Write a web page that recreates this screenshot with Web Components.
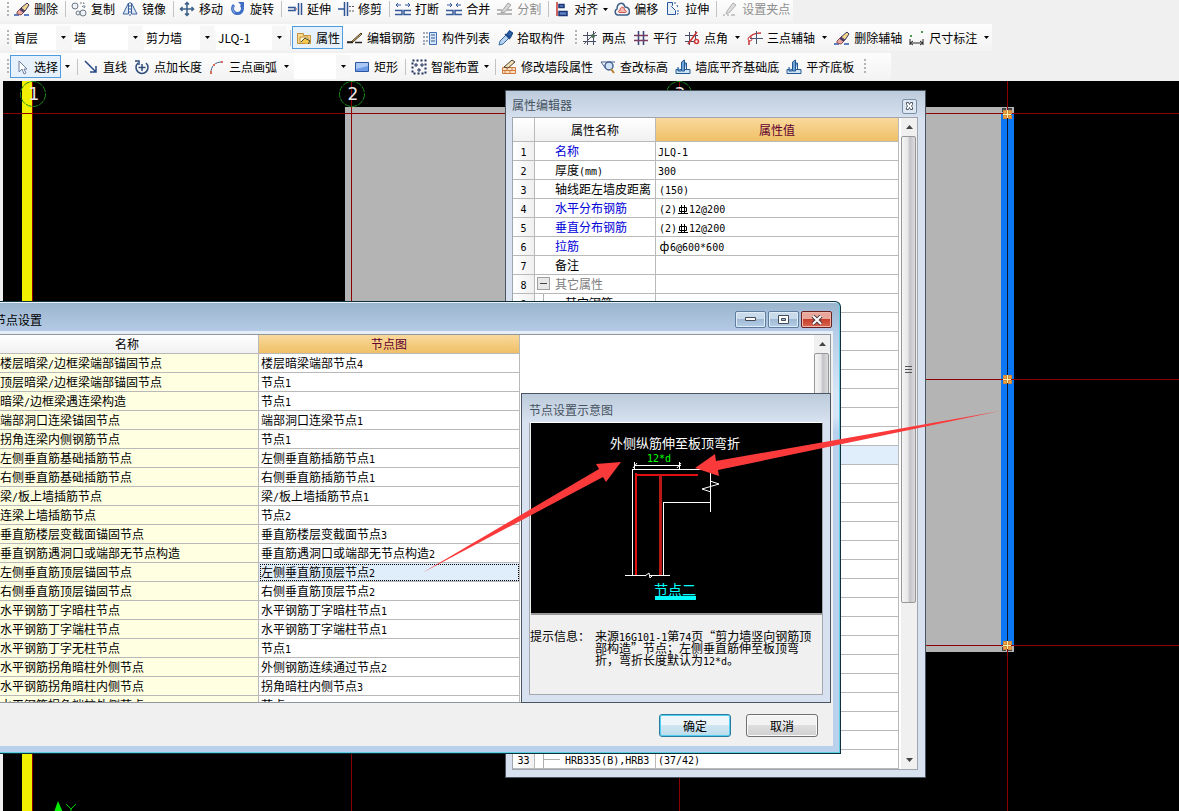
<!DOCTYPE html>
<html lang="zh-CN">
<head>
<meta charset="utf-8">
<title>节点设置</title>
<style>
  html, body { margin: 0; height: 100%; }
  body { font: 12px/18px "Noto Sans CJK SC", sans-serif; color: #000; background: #f0f0f0; text-spacing-trim: space-all; overflow: hidden; }
</style>
</head>
<body>
<cad-app></cad-app>
<script>
const ICONS = {
  erase: '<path d="M0 14h5M10 14h5" stroke="#5b7fc0" stroke-width="2"/><path d="M3 11l4-4 4 3-4 4-4-1z" fill="#e8a9a0" stroke="#8d4a50"/><path d="M7 7l6-5 2 2-4 6z" fill="#f3d78a" stroke="#3b3560"/><path d="M6 8l4 3" stroke="#4a3a6a" stroke-width="2"/>',
  copy: '<circle cx="4" cy="5" r="3" fill="#eef2f6" stroke="#6c7a86"/><circle cx="7" cy="12" r="2" fill="#eef2f6" stroke="#6c7a86"/><circle cx="12" cy="12" r="3" fill="#eef2f6" stroke="#6c7a86"/><path d="M9 2h4v4M11 5l2 2 2-2" fill="none" stroke="#6c7a86" stroke-dasharray="2 1"/>',
  mirror: '<path d="M6.500 2v11H1zM9.500 2v11H15z" fill="#dbe7f5" stroke="#3c629e"/><path d="M8 1v14" stroke="#3c629e" stroke-dasharray="2 1"/>',
  move: '<path d="M8 1v14M1 8h14M6 3.500l2-2 2 2M6 12.500l2 2 2-2M3.500 6l-2 2 2 2M12.500 6l2 2-2 2" fill="none" stroke="#3d6089" stroke-width="1.500"/>',
  rotate: '<path d="M4 4a5 5 0 1 0 7 0" fill="none" stroke="#3f6fc4" stroke-width="3"/><path d="M8 1h6v6z" fill="#3f6fc4"/><path d="M4 5a4.500 4.500 0 0 0 1 7" fill="none" stroke="#8fb3ea"/>',
  extend: '<path d="M1 6.500h7v3H1" stroke="#2f5596" stroke-width="1.500"/><path d="M9 8h2" stroke="#c33" stroke-dasharray="1 1"/><path d="M11.500 2v12M14.500 2v12" stroke="#2f5596" stroke-width="1.500"/>',
  trim: '<path d="M0 8h6M6.500 1v14M9.500 1v14" stroke="#2f5596" stroke-width="1.500"/><path d="M11 5.500h5M11 10h5" stroke="#556" stroke-dasharray="2 1"/>',
  brk: '<path d="M6 4H1m2-2L1 4l2 2M10 4h5m-2-2l2 2-2 2" fill="none" stroke="#35599a"/><path d="M0 9.500h7v4H0M16 9.500H9v4h7" fill="none" stroke="#35599a" stroke-width="1.500"/>',
  merge: '<path d="M1 4h5M4 2l2 2-2 2M15 4h-5m2-2l-2 2 2 2" fill="none" stroke="#35599a"/><path d="M0 9.500h7v4H0M16 9.500H9v4h7" fill="none" stroke="#35599a" stroke-width="1.500"/>',
  split: '<path d="M5 10l6-8 3 2-6 7-4 1z" fill="#d8d8d8" stroke="#a2a2a2"/><path d="M0 9h5M0 13h15M10 9h5" stroke="#a2a2a2" stroke-width="1.500"/>',
  align: '<path d="M3 1v14" stroke="#c6342f" stroke-width="1.500"/><path d="M5 3.500h5v3H5zM5 10.500h8v4H5z" fill="#5f7fc4" stroke="#1a3474" stroke-width="1.500"/>',
  offset: '<path d="M4 14C1 14 0 9 3 8c0-6 6-8 8-2 5 0 6 7 2 8z" fill="none" stroke="#3f5f88" stroke-width="1.500"/><path d="M5 11.500c-1-1-1-2 1-2 0-4 4-5 5 0 2 0 2 2 0 2z" fill="#f6b9b4" stroke="#d0574d"/>',
  stretch: '<path d="M2.500 1.500h5v3l-1 1 4 4v4h-8z" fill="#e6effa" stroke="#2b5a9c"/><path d="M9 2h2m1 2l1 3m0 2v4h-1" fill="none" stroke="#2b5a9c" stroke-dasharray="2 1"/>',
  setgrip: '<path d="M5 10l6-8 3 2-6 7-4 2z" fill="#dedede" stroke="#b0b0b0"/><path d="M1 14h2M5 14h2M9 14h4" stroke="#999"/>',
  props: '<path d="M1.500 3.500h6v2h7v8h-13z" fill="#fbd98c" stroke="#c4923c"/><path d="M4 7h8v6H4z" fill="#fff4cf" stroke="#c4923c"/><path d="M5 12l4-4 5 3-2 3" fill="#f7c64b" stroke="#3a4a33"/>',
  editbar: '<path d="M0 12h4l10-9 1 1-9 8z" fill="#e2c27a" stroke="#4a3a20"/><path d="M0 12.500h6M8 12.500h7" stroke="#222" stroke-width="1.500"/>',
  list: '<path d="M1 3h2M1 7h2M1 11h2M1 14h2M4 3h2M4 7h2M4 11h2" stroke="#4a5d78"/><path d="M7.500 2.500h7v12h-7z" fill="#d6e5f8" stroke="#4272b6"/><path d="M9 5h4M9 8h4M9 11h4" stroke="#35588e"/>',
  picker: '<path d="M2 15l1-4 6-6 3 3-6 6z" fill="#b7d3ef" stroke="#3c6ea5"/><path d="M8 4l5 5M9.500 5l3-4 3 2-2 4z" fill="#2e62a8" stroke="#1e4c8c" stroke-width="1.500"/>',
  twopt: '<path d="M5.500 2v13M11.500 1v14M1 5.500h14M1 11.500h13" stroke="#474d66"/><path d="M2 14L14 2" stroke="#4f5a66"/><circle cx="11" cy="6" r="2" fill="#4f6e58"/>',
  parallel: '<path d="M5.500 1v14M10.500 1v14" stroke="#34457a" stroke-width="1.500"/><path d="M1 5.500h14M1 10.500h14" stroke="#7c3c60" stroke-width="1.500"/>',
  ptangle: '<path d="M5.500 2v13M11.500 1v9M1 5.500h13M1 11.500h9" stroke="#474d66"/><path d="M4 14L13 2" stroke="#c33" stroke-width="1.500"/><circle cx="12.500" cy="11.500" r="2" fill="#fff" stroke="#c33" stroke-width="1.500"/>',
  threept: '<path d="M2 15V9q2-6 12-6" fill="none" stroke="#c33" stroke-width="1.500"/><circle cx="3" cy="9" r="2" fill="#fff" stroke="#c33"/><path d="M9.500 1v13M3 8.500h13" stroke="#4a5578"/>',
  dim: '<path d="M1 9v6M14 9v6M1 13h13M4 11l-3 2 3 2M11 11l3 2-3 2" fill="none" stroke="#222"/><path d="M1 5h2v2H1zM12 1h2v2h-2z" fill="#4c9a50"/>',
  cursor: '<path d="M5 2v11l3-3 2 5 2-1-2-4h3z" fill="#fff" stroke="#6c7f9e"/>',
  line: '<path d="M2 2l11 11M13 7v6H7" fill="none" stroke="#2a4a86" stroke-width="1.500"/>',
  ptlen: '<path d="M4 4a6 6 0 1 0 8 0" fill="none" stroke="#2f4d7c" stroke-width="1.500"/><path d="M8 5v7M4.500 8.500h7M1 2h4v4" fill="none" stroke="#2f4d7c" stroke-width="1.500"/>',
  arc: '<path d="M2 14C2 7 6 3 13 3" fill="none" stroke="#445a86"/><path d="M1 12h2v3H1zM4 5h2v2H4zM12 2h2v2h-2z" fill="#d76c58"/>',
  rect: '<path d="M1.500 3.500h13v9h-13z" fill="#6d9be6" stroke="#2d57a3"/><path d="M2 4h12v3L2 10z" fill="#abc8f5"/>',
  smart: '<path d="M1.500 1.500h13v13h-13z" fill="none" stroke="#20305a" stroke-width="2" stroke-dasharray="2 2"/><path d="M5 4v4M3 6h4M11 4v4M9 6h4M8 9v4M6 11h4" stroke="#20305a"/>',
  wall: '<path d="M1.500 8.500h13v6h-13zM1 11.500h14M6 8v3M11 8v3M4 12v3M9 12v3" fill="#fbe0c4" stroke="#cf7a3c"/><path d="M3 8l8-7 3 2-7 6z" fill="#f1dfb4" stroke="#4c4030"/>',
  elev: '<path d="M1 3h14M1 3l5 7 3-3" fill="none" stroke="#46618f"/><circle cx="9" cy="7" r="4" fill="#cfe2f6" stroke="#46618f" stroke-width="1.500"/><path d="M11 10l3 4" stroke="#b98034" stroke-width="2"/>',
  base: '<path d="M1 14.500h14v-4H1z" fill="#cfe3f6" stroke="#24598f"/><path d="M6.500 12V3l3-2v11zM9.500 4h2v7M3 8v4h3" fill="#6ea4d8" stroke="#24598f"/>'
};

/* Single-byte runs are set in a half-width face beside the full-width CJK text. */
const mix = s => s.replace(/[\x21-\x7e]+/g, m => `<span class="en">${m}</span>`);
const EN = '.en { font-family: "DejaVu Sans Mono", monospace; font-size: 10px; line-height: 0; }';
const REBAR = '<svg width="12" height="10" viewBox="0 0 12 10" role="img" aria-label="钢筋符号"><path d="M2.500 2.500h7v4h-7zM4.500 0v8M7.500 0v8M1 8.500h10" fill="none" stroke="#000"/></svg>';

function define(name, render, after) {
  customElements.define(name, class extends HTMLElement {
    connectedCallback() {
      if (this.shadowRoot) return;
      this.attachShadow({ mode: 'open' }).innerHTML = render(this);
      if (after) after(this);
    }
  });
}

define('tool-bar', () => `<style>
  :host { display: flex; width: fit-content; align-items: center; height: 27px; margin-bottom: 2px;
    background: linear-gradient(#fdfdfd, #f3f3f3); white-space: nowrap; }
  :host([first]) { height: 22px; padding-bottom: 4px; box-sizing: border-box; }
  :host([last]) { padding-right: 24px; }
</style><slot></slot>`);

define('tool-grip', () => `<style>
  :host { display: block; width: 3px; height: 15px; margin-left: 7px;
    background: repeating-linear-gradient(#b4b4b4 0 2px, transparent 2px 4px); background-size: 2px 100%; background-repeat: no-repeat; }
</style>`);

define('tool-sep', () => `<style>
  :host { display: block; width: 1px; height: 16px; margin: 0 1px 0 4px; background: #c3c3c3; }
</style>`);

define('tool-button', h => `<style>
  :host { display: flex; }
  button { all: unset; box-sizing: border-box; display: flex; align-items: center; gap: 4px; height: 23px; padding: 0 3px 0 4px; }
  :host([active]) button { box-shadow: 0 0 0 1px #4f9be0 inset; background: #e7f1fb; }
  :host([disabled]) button { color: #8f8f8f; }
  .arrow { width: 9px; display: flex; align-items: center; justify-content: center; }
  .arrow.split { width: 12px; }
</style>
<button type="button" ${h.hasAttribute('disabled') ? 'disabled' : ''}><svg width="16" height="16" viewBox="0 0 16 16" fill="none">${ICONS[h.getAttribute('icon')]}</svg><span><slot></slot></span></button>
${h.hasAttribute('menu') ? `<span class="arrow ${h.getAttribute('menu')}"><svg width="5" height="3"><path d="M0 0h5L2.500 3z"/></svg></span>` : ''}`);

define('tool-combo', h => `<style>
  :host { display: grid; grid-template-columns: 1fr 14px; width: 70px; height: 24px; margin-left: 2px; background: #fff; align-items: center; }
  :host([narrow]) { width: 58px; }
  :host([blank]) { width: 56px; }
  select { grid-area: 1 / 1 / 2 / 3; appearance: none; border: 0; margin: 0; padding: 0 0 0 2px; width: 100%; height: 100%; background: transparent; font: inherit; color: inherit; }
  svg { grid-area: 1 / 2; justify-self: center; pointer-events: none; }
  i { grid-area: 1 / 2; height: 100%; background: #f6f6f6; }
</style>
<i></i><select aria-label="${h.getAttribute('label')}"><option>${h.getAttribute('value') || ''}</option></select>
<svg width="5" height="3"><path d="M0 0h5L2.500 3z"/></svg>`);

define('cad-toolbars', () => `<style>
  :host { display: block; height: 81px; background: #f0f0f0; }
</style>
<tool-bar first><tool-grip></tool-grip><tool-button icon="erase">删除</tool-button><tool-sep></tool-sep><tool-button icon="copy">复制</tool-button><tool-button icon="mirror">镜像</tool-button><tool-sep></tool-sep><tool-button icon="move">移动</tool-button><tool-button icon="rotate">旋转</tool-button><tool-sep></tool-sep><tool-button icon="extend">延伸</tool-button><tool-button icon="trim">修剪</tool-button><tool-sep></tool-sep><tool-button icon="brk">打断</tool-button><tool-button icon="merge">合并</tool-button><tool-button icon="split" disabled>分割</tool-button><tool-sep></tool-sep><tool-button icon="align" menu>对齐</tool-button><tool-button icon="offset">偏移</tool-button><tool-button icon="stretch">拉伸</tool-button><tool-sep></tool-sep><tool-button icon="setgrip" disabled>设置夹点</tool-button></tool-bar>
<tool-bar><tool-grip></tool-grip><tool-combo narrow label="楼层" value="首层"></tool-combo><tool-combo label="构件类型" value="墙"></tool-combo><tool-combo label="构件子类" value="剪力墙"></tool-combo><tool-combo label="构件" value="JLQ-1"></tool-combo><tool-sep></tool-sep><tool-button icon="props" active>属性</tool-button><tool-button icon="editbar">编辑钢筋</tool-button><tool-button icon="list">构件列表</tool-button><tool-button icon="picker">拾取构件</tool-button><tool-grip></tool-grip><tool-button icon="twopt">两点</tool-button><tool-button icon="parallel">平行</tool-button><tool-button icon="ptangle" menu="split">点角</tool-button><tool-button icon="threept" menu="split">三点辅轴</tool-button><tool-button icon="erase">删除辅轴</tool-button><tool-button icon="dim" menu="split">尺寸标注</tool-button></tool-bar>
<tool-bar last><tool-grip></tool-grip><tool-button icon="cursor" menu="split" active>选择</tool-button><tool-sep></tool-sep><tool-button icon="line">直线</tool-button><tool-button icon="ptlen">点加长度</tool-button><tool-button icon="arc" menu="split">三点画弧</tool-button><tool-combo blank label="画弧方式"></tool-combo><tool-button icon="rect">矩形</tool-button><tool-sep></tool-sep><tool-button icon="smart" menu>智能布置</tool-button><tool-sep></tool-sep><tool-button icon="wall">修改墙段属性</tool-button><tool-button icon="elev">查改标高</tool-button><tool-button icon="base">墙底平齐基础底</tool-button><tool-button icon="base">平齐底板</tool-button><tool-grip></tool-grip></tool-bar>`);

const grip = y => `<g transform="translate(1007 ${y})"><path d="M-4-4h3v3h-3zM1-4h3v3H1zM-4 1h3v3h-3zM1 1h3v3H1z" fill="#f0a040" stroke="#d08838"/><path d="M0-4v8M-4 0h8" stroke="#fff2a8"/></g>`;
const axis = (x, n) => `<circle cx="${x}" cy="94" r="12.500" fill="none" stroke="#1c8a1c" stroke-dasharray="6 1"/><text x="${x + 1}" y="100" text-anchor="middle" fill="#e8e8e8">${n}</text>`;

define('drawing-canvas', () => `<style>
  :host { display: block; background: #000; }
  svg { display: block; width: 100%; height: 100%; }
  text { font: 17px "DejaVu Sans", sans-serif; }
</style>
<svg><g transform="translate(0 -81)">
  <g shape-rendering="crispEdges">
  <rect y="81" width="3" height="2000" fill="#f0f0f0"/>
  <rect x="22" y="81" width="10" height="2000" fill="#f0f000"/>
  <rect x="345" y="107" width="669" height="545" fill="#b4b4b4"/>
  <rect x="1001" y="113" width="13" height="532" fill="#0a78f5"/>
  <g fill="#8c0000">
    <rect x="32" y="81" width="1" height="2000"/><rect x="351" y="81" width="1" height="2000"/><rect x="679" y="81" width="1" height="2000"/><rect x="1007" y="81" width="1" height="2000"/>
    <rect x="3" y="113" width="100%" height="1"/><rect x="520" y="379" width="100%" height="1"/><rect x="520" y="645" width="100%" height="1"/>
  </g>
  <rect x="1007" y="113" width="1" height="532" fill="#101828"/>
  <path d="M1002 108h4v4h-4zM1008 108h4v4h-4zM1002 647h4v4h-4zM1008 647h4v4h-4z" fill="#3f4448"/>
  ${grip(114)}${grip(379)}${grip(645)}
  </g>
  ${axis(33, 1)}${axis(352, 2)}${axis(679, 3)}
  <path d="M58 801l6 14H53z" fill="#00f000"/><path d="M66 804l5 5 5-5M71 809v4" fill="none" stroke="#0c0"/>
</g></svg>`);

define('app-window', h => `<style>
  :host { display: flex; flex-direction: column; box-sizing: border-box; border: 1px solid #4a5562; background: linear-gradient(#bccbdb, #d7e1ef 28px); }
  header { display: flex; align-items: center; height: 26px; padding: 2px 8px 0 6px; box-sizing: border-box; color: #46535f; }
  .t { flex: 1; white-space: nowrap; }
  button { all: unset; display: grid; place-items: center; box-sizing: border-box; }
  .x { width: 15px; height: 15px; border: 1px solid #7b90a8; border-radius: 2px; margin-top: 2px; background: #dde7f2; }
  :host([main]) { border: 1px solid #10303c; border-left: 0; border-radius: 0 6px 0 0; overflow: hidden; padding: 0 7px 7px; background: linear-gradient(#9ab3cd, #b6cce6 30px, #d5e5f7 90px, #d5e5f7 115px, #b9d1ec 130px, #b9d1ec); box-shadow: 0 -1px 0 #5ccfe0 inset, -1px 0 0 #5ccfe0 inset, 0 1px 0 #e8f4fb inset; }
  :host([main]) header { height: 29px; padding: 6px 1px 0 1px; color: #000; gap: 2px; }
  .c { width: 31px; height: 17px; border: 1px solid #5f7da0; border-radius: 2px; background: linear-gradient(#c9daeb 48%, #9fbad6 50%, #b7cfe7); box-shadow: 0 0 0 1px #e0ecf7 inset; }
  .c.close { border-color: #6b1f1f; background: linear-gradient(#e9a79b 48%, #c8402c 50%, #d9664f); box-shadow: 0 0 0 1px #efb8ae inset; }
  :host([tool]) header { height: 28px; padding: 4px 7px 0; }
</style>
<header><span class="t">${h.getAttribute('caption')}</span>${
  h.hasAttribute('main') ? `<button class="c" aria-label="最小化"><svg width="11" height="5"><path d="M.5.500h10v3H.500z" fill="#fff" stroke="#444c58"/></svg></button><button class="c" aria-label="最大化"><svg width="11" height="9"><path d="M.5.500h10v8H.500z" fill="#fff" stroke="#444c58"/><path d="M3.500 3.500h4v2h-4z" fill="#9fbad6" stroke="#444c58"/></svg></button><button class="c close" aria-label="关闭"><svg width="12" height="10"><path d="M2 1l8 8M10 1l-8 8" stroke="#4b3a42" stroke-width="4"/><path d="M2 1l8 8M10 1l-8 8" stroke="#fff" stroke-width="2"/></svg></button>`
  : h.hasAttribute('closable') ? '<button class="x" aria-label="关闭"><svg width="9" height="8"><path d="M1.500.500h2l1 2 1-2h2v2l-1 1.500 1 1.500v2h-2l-1-2-1 2h-2v-2l1-1.500-1-1.500z" fill="#fff" stroke="#4b5663"/></svg></button>' : ''}</header>
<slot></slot>`);

define('scroll-bar', h => `<style>
  :host { display: flex; flex-direction: column; width: 16px; background: #f0f0f0; }
  .a { height: 18px; display: grid; place-items: center; }
  .track { flex: 1; }
  .thumb { height: ${h.getAttribute('size')}; margin-right: 1px; box-sizing: border-box; border: 1px solid #979797; border-radius: 2px; background: linear-gradient(90deg, #f5f5f5, #e6e6e8 45%, #c3c3c7 60%, #dcdcde); display: grid; place-items: center; }
</style>
<div class="a"><svg width="7" height="4"><path d="M0 4h7L3.500 0z" fill="#444"/></svg></div>
<div class="track"><div class="thumb"><svg width="7" height="8"><path d="M0 .500h7M0 3.500h7M0 6.500h7" stroke="#555"/></svg></div></div>
<div class="a"><svg width="7" height="4"><path d="M0 0h7L3.500 4z" fill="#444"/></svg></div>`);

const TABLE = `
  table { border-collapse: separate; border-spacing: 0; table-layout: fixed; background: #fff; }
  th, td { box-sizing: border-box; height: 19px; padding: 0; border: 0 solid #b9b9b9; border-width: 0 1px 1px 0; font-weight: normal; line-height: 18px; white-space: nowrap; overflow: hidden; text-align: left; }
  thead th { text-align: center; background: linear-gradient(#fff, #f1f1f1); }
  thead th.hot { background: linear-gradient(#f9d99c, #efc067); color: #600030; }
  .sel { background: #e0eefc; }
  ${EN}`;

const PROPS = [
  ['<b>名称</b>', mix('JLQ-1')], [mix('厚度(mm)'), mix('300')], ['轴线距左墙皮距离', mix('(150)')],
  ['<b>水平分布钢筋</b>', mix('(2)') + REBAR + mix('12@200')], ['<b>垂直分布钢筋</b>', mix('(2)') + REBAR + mix('12@200')],
  ['<b>拉筋</b>', '<span class="phi">ф</span>' + mix('6@600*600')], ['备注', ''], ['<s>其它属性</s>', ''], ['其它钢筋', '']
];

define('property-grid', () => {
  let rows = '';
  for (let i = 1; i <= 33; i++) {
    let [n, v] = PROPS[i - 1] || ['', ''];
    if (i === 33) { n = mix('HRB335(B),HRB3'); v = mix('(37/42)'); }
    const cls = i === 8 ? 'group' : i > 8 ? 'child' : '';
    rows += `<tr><th scope="row" class="no">${i < 10 || i === 33 ? mix(String(i)) : ''}</th><td class="name ${cls} ${i === 33 ? 'leaf' : ''}">${n}</td><td class="val ${i === 17 ? 'sel' : ''} ${'34567'.includes(i) && v ? 'in' : ''}">${v}</td></tr>`;
  }
  return `<style>
  :host { display: flex; margin: 0 7px 7px 6px; border: 1px solid #a0a6ae; background: #fff; }
  ${TABLE}
  table { flex: 1; width: 100%; }
  thead th { height: 24px; line-height: 23px; }
  .no { text-align: center; background: linear-gradient(90deg, #fff, #f0f0f0); }
  .name { padding-left: 20px; }
  .val { padding-left: 2px; }
  .val.in { padding-left: 3px; }
  .phi { display: inline-block; width: 11px; text-align: center; line-height: 1; }
  svg { vertical-align: -2px; }
  b { font-weight: normal; color: #0000d8; }
  s { text-decoration: none; color: #808080; }
  .group { background: linear-gradient(#444, #444) 5px 8px / 7px 1px no-repeat, linear-gradient(#e8e8e8, #e8e8e8) 3px 3px / 11px 11px no-repeat, linear-gradient(#a0a0a0, #a0a0a0) 2px 2px / 13px 13px no-repeat; }
  .child { padding-left: 30px; background: linear-gradient(#b0b0b0, #b0b0b0) 8px 0 / 1px 100% no-repeat; }
  .leaf { background: linear-gradient(#b0b0b0, #b0b0b0) 8px 0 / 1px 100% no-repeat, linear-gradient(#b0b0b0, #b0b0b0) 8px 9px / 17px 1px no-repeat; }
  scroll-bar { margin-left: 2px; }
</style>
<table><colgroup><col style="width:22px"><col style="width:121px"><col></colgroup>
<thead><tr><th></th><th scope="col">属性名称</th><th scope="col" class="hot">属性值</th></tr></thead><tbody>${rows}</tbody></table>
<scroll-bar size="76%"></scroll-bar>`;
});

const NODES = [
  ['楼层暗梁/边框梁端部锚固节点', '楼层暗梁端部节点4'], ['顶层暗梁/边框梁端部锚固节点', '节点1'], ['暗梁/边框梁遇连梁构造', '节点1'],
  ['端部洞口连梁锚固节点', '端部洞口连梁节点1'], ['拐角连梁内侧钢筋节点', '节点1'], ['左侧垂直筋基础插筋节点', '左侧垂直筋插筋节点1'],
  ['右侧垂直筋基础插筋节点', '右侧垂直筋插筋节点1'], ['梁/板上墙插筋节点', '梁/板上墙插筋节点1'], ['连梁上墙插筋节点', '节点2'],
  ['垂直筋楼层变截面锚固节点', '垂直筋楼层变截面节点3'], ['垂直钢筋遇洞口或端部无节点构造', '垂直筋遇洞口或端部无节点构造2'],
  ['左侧垂直筋顶层锚固节点', '左侧垂直筋顶层节点2'], ['右侧垂直筋顶层锚固节点', '右侧垂直筋顶层节点2'], ['水平钢筋丁字暗柱节点', '水平钢筋丁字暗柱节点1'],
  ['水平钢筋丁字端柱节点', '水平钢筋丁字端柱节点1'], ['水平钢筋丁字无柱节点', '节点1'], ['水平钢筋拐角暗柱外侧节点', '外侧钢筋连续通过节点2'],
  ['水平钢筋拐角暗柱内侧节点', '拐角暗柱内侧节点3'], ['水平钢筋拐角端柱外侧节点', '节点3']
];

define('node-table', () => `<style>
  :host { display: flex; height: 367px; overflow: hidden; margin: 0 2px; border: 1px solid #8f969e; background: #fff; }
  ${TABLE}
  table { width: 524px; align-self: flex-start; }
  thead th { height: 19px; }
  td:first-child { background: #ffffe1; padding-left: 4px; }
  td:last-child { padding-left: 2px; }
  td.sel { outline: 1px dotted #000; outline-offset: -2px; }
  div { flex: 1; }
</style>
<table><colgroup><col style="width:263px"><col></colgroup><thead><tr><th scope="col">名称</th><th scope="col" class="hot">节点图</th></tr></thead>
<tbody>${NODES.map(([a, b], i) => `<tr><td>${mix(a)}</td><td class="${i === 11 ? 'sel' : ''}">${mix(b)}</td></tr>`).join('')}</tbody></table>
<div></div><scroll-bar size="40%"></scroll-bar>`);

define('node-dialog', () => `<style>
  :host { display: block; }
  section { background: #f0f0f0; border-top: 3px solid #e6eef8; }
  footer { display: flex; justify-content: flex-end; gap: 15px; padding: 11px 15px 9px; }
  button { box-sizing: border-box; width: 72px; height: 23px; padding: 0; font: inherit; line-height: 18px; border: 1px solid #707070; border-radius: 3px; background: linear-gradient(#f3f3f3 48%, #dedede 50%, #d0d0d0); box-shadow: 0 0 0 1px #fbfbfb inset; }
  button.ok { border-color: #2c7ca0; background: linear-gradient(#eef6fb 48%, #d0e6f2 50%, #bcdcec); box-shadow: 0 0 0 1px #4fd0f2 inset; }
</style>
<app-window main caption="节点设置"><section><node-table></node-table>
<footer><button class="ok" type="button">确定</button><button type="button">取消</button></footer></section></app-window>`);

define('node-preview', () => `<style>
  :host { display: block; }
  section { margin: 0 7px; border: 1px solid #a4a8ae; border-top-color: #fff; background: #f0f0f0; height: 273px; box-sizing: border-box; }
  .pic { display: block; width: 291px; height: 190px; background: #000; margin-left: 1px; border-bottom: 2px solid #9a9a9a; }
  text { font-family: "Noto Sans CJK SC", sans-serif; }
  dl { display: flex; margin: 15px 0 0; line-height: 12px; }
  dt { width: 65px; }
  dd { margin: 0; width: 219px; }
  app-window { height: 310px; }
  ${EN}
</style>
<app-window tool caption="节点设置示意图"><section>
<svg class="pic" viewBox="531 423 291 190" fill="none" shape-rendering="crispEdges">
  <path d="M632.500 575V469.500H710.500V512M663.500 575V502.500H710.500M625 575.500H646M650 575.500H670M634.500 462v8M679.500 462v8M634 465.500H681" stroke="#fff"/>
  <path d="M633 468l4-5M677 468l4-5M710 481l9 3-17 5 9 3M645 576l4-3 1 5 3-3" stroke="#fff" shape-rendering="auto"/>
  <path d="M635.500 575V473M635 474.500H698" stroke="#e01010" stroke-width="2"/>
  <path d="M660 575V475" stroke="#b81818" stroke-width="3"/>
  <text x="610" y="448" font-size="13" fill="#fff">外侧纵筋伸至板顶弯折</text>
  <text x="647" y="462" font-size="10" fill="#0f0" style="font-family:'DejaVu Sans Mono'">12*d</text>
  <text x="654" y="595" font-size="14" fill="#0ff">节点二</text>
  <rect x="655" y="596" width="41" height="4" fill="#0ff"/>
</svg>
<dl><dt>提示信息：</dt><dd>${mix('来源16G101-1第74页“剪力墙竖向钢筋顶部构造”节点；左侧垂直筋伸至板顶弯折，弯折长度默认为12*d。')}</dd></dl>
</section></app-window>`);

define('callout-arrows', () => `<style>
  :host { display: block; pointer-events: none; }
  svg { display: block; width: 100%; height: 100%; }
</style>
<svg><g transform="translate(0 -81)" fill="#fa3a3a"><path d="M422 573L599 469L596 464L621 462L606 482L603 477z"/><path d="M1000 411L716 461L715 454L695 468L719 476L718 470z"/></g></svg>`);

define('cad-app', () => `<style>
  :host { display: flex; flex-direction: column; height: 100vh; }
  main { position: relative; flex: 1; overflow: hidden; }
  drawing-canvas, callout-arrows { position: absolute; inset: 0; }
  .props { position: absolute; left: 505px; top: 9px; width: 421px; }
  node-dialog { position: absolute; left: -14px; top: 220px; width: 855px; }
  node-preview { position: absolute; left: 521px; top: 312px; width: 310px; }
</style>
<cad-toolbars></cad-toolbars>
<main><drawing-canvas></drawing-canvas>
<app-window class="props" closable caption="属性编辑器"><property-grid></property-grid></app-window>
<node-dialog></node-dialog><node-preview></node-preview><callout-arrows></callout-arrows></main>`);
</script>
</body>
</html>
